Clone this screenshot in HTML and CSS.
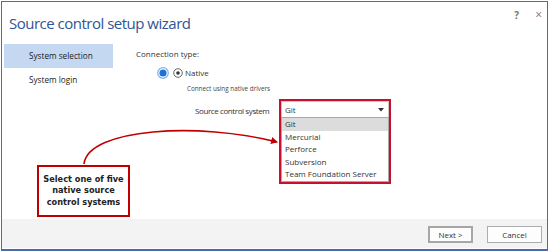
FILE: index.html
```html
<!DOCTYPE html>
<html>
<head>
<meta charset="utf-8">
<link rel="stylesheet" href="styles.css">
</head>
<body>
<div class="window">
  <header class="titlebar">
    <h1 class="title">Source control setup wizard</h1>
    <div class="controls"><span class="ctl">?</span><span class="ctl close">×</span></div>
  </header>
  <div class="main">
    <nav class="sidebar">
      <div class="nav-item active">System selection</div>
      <div class="nav-item">System login</div>
    </nav>
    <section class="content">
      <div class="label">Connection type:</div>
      <div class="radio-row">
        <svg class="radio-big" width="12" height="12" viewBox="0 0 12 12"><circle cx="6" cy="6" r="5.3" fill="#fff" stroke="#7fb2ee" stroke-width="1.2"/><circle cx="6" cy="6" r="3.6" fill="#1f6fd6"/></svg>
        <svg class="radio-small" width="10" height="10" viewBox="0 0 10 10"><circle cx="5" cy="5" r="4.3" fill="#fff" stroke="#555" stroke-width="0.9"/><circle cx="5" cy="5" r="1.8" fill="#333"/></svg>
        <span class="radio-text">Native</span>
      </div>
      <div class="hint">Connect using native drivers</div>
      <div class="field-row">
        <span class="field-label">Source control system</span>
        <div class="combo-wrap">
          <div class="combo"><span>Git</span><svg class="caret" width="6" height="4" viewBox="0 0 6 4"><path d="M0 0H6L3 3.5Z" fill="#333"/></svg></div>
          <ul class="list">
            <li class="item selected">Git</li>
            <li class="item">Mercurial</li>
            <li class="item">Perforce</li>
            <li class="item">Subversion</li>
            <li class="item">Team Foundation Server</li>
          </ul>
        </div>
      </div>
    </section>
  </div>
  <footer class="footer">
    <button class="btn primary">Next &gt;</button>
    <button class="btn">Cancel</button>
  </footer>
  <svg class="annot-arrow" width="551" height="252" viewBox="0 0 551 252">
    <defs>
      <marker id="ah" markerWidth="8" markerHeight="8" refX="6" refY="4" orient="auto" markerUnits="userSpaceOnUse">
        <path d="M0 0.5L7 4L0 7.5Z" fill="#c00000"/>
      </marker>
    </defs>
    <path d="M84 164 C 88 128 200 122 277 142" fill="none" stroke="#c00000" stroke-width="1.6" marker-end="url(#ah)"/>
  </svg>
  <div class="callout">Select one of five<br>native source<br>control systems</div>
</div>
</body>
</html>
```
FILE: styles.css
```css
* { box-sizing: border-box; }
html, body { margin: 0; padding: 0; background: #fff; }
body { font-family: "Open Sans", "Noto Sans", sans-serif; color: #333; }

.window {
  position: relative;
  margin: 1px 0 0 1px;
  width: 547px;
  height: 250px;
  border: 1px solid #4a6cae;
  border-bottom-width: 2px;
  display: flex;
  flex-direction: column;
  background: #fff;
}

.titlebar {
  height: 42px;
  display: flex;
  justify-content: space-between;
  align-items: flex-start;
  padding: 0 0 0 7px;
}
.title {
  margin: 10px 0 0 0;
  font-size: 15px;
  font-weight: 400;
  color: #2f5597;
  letter-spacing: -0.5px;
  line-height: 22px;
}
.controls {
  display: flex;
  gap: 16px;
  padding: 7px 5px 0 0;
  font-size: 10px;
  line-height: 12px;
  color: #777;
}
.ctl { font-weight: 700; }
.close { font-size: 12px; font-weight: 400; }

.main {
  height: 175px;
  display: flex;
}
.sidebar {
  width: 111px;
  padding-left: 2px;
  flex: none;
}
.nav-item {
  height: 24px;
  line-height: 24px;
  padding-left: 25px;
  font-size: 8.2px;
  color: #222;
}
.nav-item.active { background: #c5d8f1; }

.content {
  flex: 1;
  padding: 4px 0 0 23px;
  font-size: 8px;
  color: #333;
}
.label { line-height: 12px; }
.radio-row {
  margin: 7px 0 0 21px;
  height: 12px;
  display: flex;
  align-items: center;
}
.radio-big { display: block; }
.radio-small { display: block; margin-left: 4px; }
.radio-text { margin-left: 2px; line-height: 12px; }
.hint {
  margin: 5px 0 0 51px;
  font-size: 6.3px;
  line-height: 10px;
  color: #444;
}
.field-row {
  margin: 5px 0 0 59px;
  display: flex;
  align-items: flex-start;
}
.field-label {
  width: 84px;
  line-height: 12px;
  margin-top: 6px;
  letter-spacing: -0.4px;
}
.combo-wrap {
  width: 112px;
  height: 85px;
  border: 2px solid #c8102e;
  background: #fff;
}
.combo {
  height: 16px;
  display: flex;
  align-items: center;
  justify-content: space-between;
  padding: 0 4px 0 3px;
  border: 1px solid #c9c9c9;
  border-bottom: none;
  background: #fff;
}
.caret { display: block; }
.list {
  list-style: none;
  margin: 0;
  padding: 0;
  height: 65px;
  border: 1px solid #a9a9a9;
}
.item {
  height: 12.5px;
  line-height: 12.5px;
  padding-left: 3px;
  color: #333;
}
.item.selected { background: #dcdcdc; }

.footer {
  height: 29px;
  background: #f3f3f3;
  display: flex;
  justify-content: flex-end;
  align-items: flex-start;
  gap: 14px;
  padding: 7px 5px 0 0;
}
.btn {
  height: 17px;
  padding: 0;
  font-family: "Open Sans", "Noto Sans", sans-serif;
  font-size: 8px;
  color: #333;
  background: #fdfdfd;
  border: 1px solid #adadad;
  border-radius: 0;
  width: 55px;
}
.btn.primary { width: 45px; border: 2px solid #a6a6a6; }

.annot-arrow {
  position: absolute;
  left: -2px;
  top: -2px;
  pointer-events: none;
}
.callout {
  position: absolute;
  left: 35px;
  top: 163px;
  width: 93px;
  height: 52px;
  border: 2px solid #c00000;
  background: #fff;
  display: flex;
  align-items: center;
  justify-content: center;
  text-align: center;
  font-family: "DejaVu Sans", sans-serif;
  font-weight: 700;
  font-size: 8.2px;
  line-height: 11.5px;
  color: #222;
}
```
